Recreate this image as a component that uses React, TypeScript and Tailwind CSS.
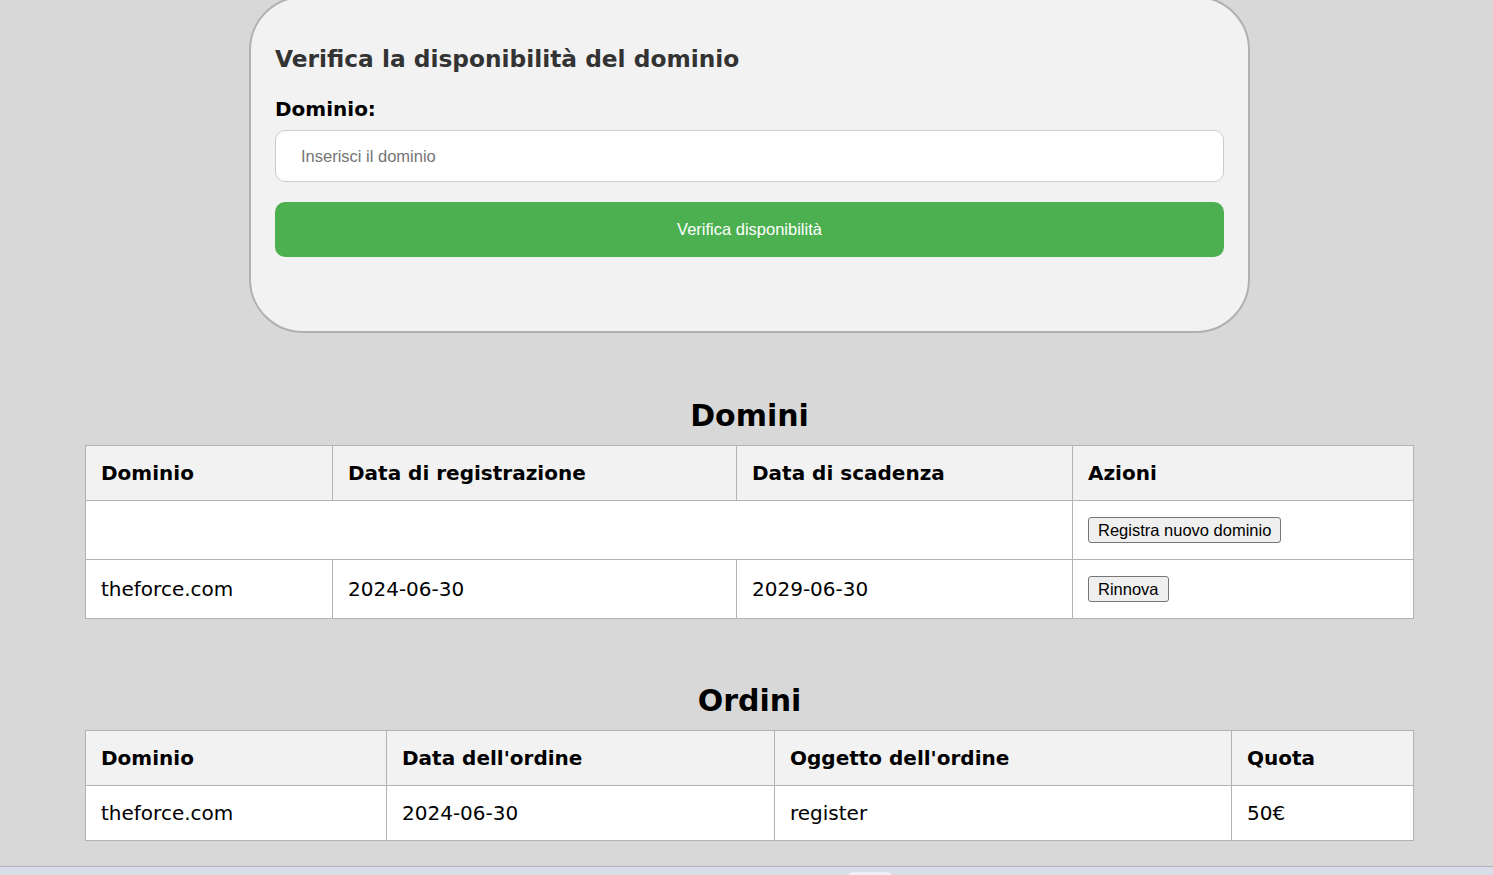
import React from 'react';

const sans = "font-['DejaVu_Sans',Verdana,sans-serif]";
const arial = "font-['Liberation_Sans',Arial,sans-serif]";

function NativeButton({ label }: { label: string }) {
  return (
    <button
      className={`${arial} text-[16.5px] leading-[24px] h-[26px] px-[9px] bg-[#efefef] text-black border border-[#767676] rounded-[3px]`}
    >
      {label}
    </button>
  );
}

const th = 'border border-[#b3b3b3] bg-[#f2f2f2] text-left font-bold pl-[15px] pr-4 py-4 leading-[22px]';
const td = 'border border-[#b3b3b3] bg-white text-left font-normal pl-[15px] pr-4 py-4 leading-[22px] align-middle';

export default function App() {
  return (
    <div className={`${sans} min-h-screen w-full bg-[#d8d8d8] text-black overflow-hidden flex flex-col`}>
      {/* domain check card */}
      <div className="ml-[249px] -mt-[4px] w-[1001px] rounded-[54px] border-2 border-[#b0b0b0] bg-[#f2f2f2] px-[24px] pt-[47px] pb-[74px]">
        <h2 className="text-[23.3px] font-bold leading-[28px] text-[#333333]">
          Verifica la disponibilità del dominio
        </h2>
        <label className="block mt-[24px] text-[20px] font-bold leading-[24px]">Dominio:</label>
        <input
          type="text"
          placeholder="Inserisci il dominio"
          className={`${arial} mt-[9px] block w-full h-[52px] rounded-[10px] border border-[#cccccc] bg-white px-[25px] text-[16.5px] placeholder:text-[#757575] outline-none`}
        />
        <button
          className={`${arial} mt-[20px] block w-full h-[55px] rounded-[10px] bg-[#4caf50] text-white text-[16.5px]`}
        >
          Verifica disponibilità
        </button>
      </div>

      {/* Domini */}
      <div className="ml-[85px] w-[1329px]">
        <h2 className="mt-[65px] text-center text-[30px] font-bold leading-[36px]">Domini</h2>
        <table className="mt-[11px] w-full table-fixed border-collapse text-[20px]">
          <colgroup>
            <col className="w-[247px]" />
            <col className="w-[404px]" />
            <col className="w-[336px]" />
            <col />
          </colgroup>
          <thead>
            <tr>
              <th className={th}>Dominio</th>
              <th className={th}>Data di registrazione</th>
              <th className={th}>Data di scadenza</th>
              <th className={th}>Azioni</th>
            </tr>
          </thead>
          <tbody>
            <tr>
              <td className={td} colSpan={3}></td>
              <td className={`${td} leading-none`}>
                <NativeButton label="Registra nuovo dominio" />
              </td>
            </tr>
            <tr>
              <td className={td}>theforce.com</td>
              <td className={td}>2024-06-30</td>
              <td className={td}>2029-06-30</td>
              <td className={`${td} leading-none`}>
                <NativeButton label="Rinnova" />
              </td>
            </tr>
          </tbody>
        </table>

        {/* Ordini */}
        <h2 className="mt-[64px] text-center text-[30px] font-bold leading-[36px]">Ordini</h2>
        <table className="mt-[11px] w-full table-fixed border-collapse text-[20px]">
          <colgroup>
            <col className="w-[301px]" />
            <col className="w-[388px]" />
            <col className="w-[457px]" />
            <col />
          </colgroup>
          <thead>
            <tr>
              <th className={th}>Dominio</th>
              <th className={th}>Data dell'ordine</th>
              <th className={th}>Oggetto dell'ordine</th>
              <th className={th}>Quota</th>
            </tr>
          </thead>
          <tbody>
            <tr>
              <td className={td}>theforce.com</td>
              <td className={td}>2024-06-30</td>
              <td className={td}>register</td>
              <td className={td}>50€</td>
            </tr>
          </tbody>
        </table>
      </div>

      {/* bottom strip */}
      <div className="mt-[25px] flex-1 min-h-[40px] border-t border-[#b0b3bb] bg-[#d9dde8] flex justify-center">
        <div className="mt-[5px] ml-[246px] w-[46px] h-[20px] rounded-t-[6px] bg-[#eef0f5]" />
      </div>
    </div>
  );
}
